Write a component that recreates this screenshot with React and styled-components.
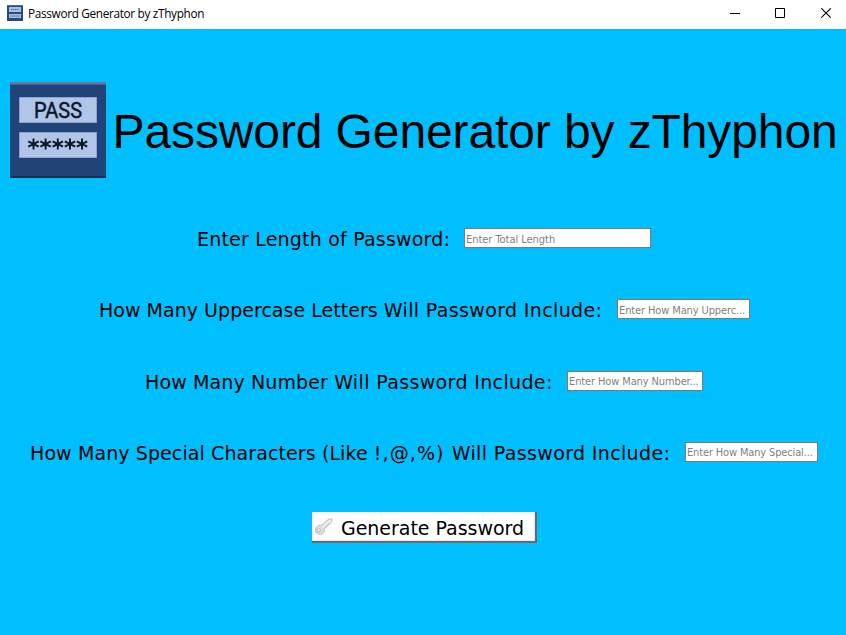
import React from "react";
import styled, { createGlobalStyle } from "styled-components";

const GlobalStyle = createGlobalStyle`
  * { box-sizing: border-box; }
  html, body { margin: 0; padding: 0; background: #00bfff; overflow: hidden; }
`;

const Window = styled.div`
  display: flex;
  flex-direction: column;
  width: 846px;
  height: 635px;
  background: #00bfff;
  color: #000;
`;

const TitleBar = styled.header`
  display: flex;
  align-items: flex-start;
  height: 29px;
  flex: none;
  padding-left: 7px;
  background: #fff;
`;

const TitleIcon = styled.svg`
  width: 16px;
  height: 16px;
  margin-top: 5px;
  flex: none;
`;

const TitleText = styled.span`
  margin: 5px auto 0 5px;
  font: 11.8px/17px "Open Sans", "Noto Sans", sans-serif;
  letter-spacing: -0.33px;
  white-space: nowrap;
`;

const WindowButton = styled.button`
  display: grid;
  place-items: center;
  width: ${(p) => p.$width}px;
  height: 27px;
  padding: 0;
  border: 0;
  background: transparent;
`;

const Glyph = styled.svg`
  display: block;
  width: 11px;
  height: 11px;
`;

const Banner = styled.section`
  display: flex;
  align-items: center;
  height: 96px;
  margin: 53px 0 0 10px;
  flex: none;
`;

const Logo = styled.svg`
  width: 96px;
  height: 96px;
  flex: none;
`;

const Heading = styled.h1`
  margin: 0 0 0 6.5px;
  padding-top: 3px;
  font: 400 48px/56px "Liberation Sans", Arial, sans-serif;
  letter-spacing: -0.11px;
  white-space: nowrap;
`;

const Form = styled.form`
  display: flex;
  flex-direction: column;
  gap: 51.3px;
  margin-top: 50px;
`;

const Row = styled.div`
  display: flex;
  align-items: center;
  height: 20px;
  padding-left: ${(p) => p.$indent}px;
`;

const Label = styled.label`
  width: ${(p) => p.$width}px;
  flex: none;
  padding: 2px 0 0 1px;
  font: 19px/22px Verdana, "DejaVu Sans", sans-serif;
  white-space: nowrap;
`;

const Phrase = styled.span`
  letter-spacing: ${(p) => p.$spacing}px;
`;

const Field = styled.input`
  width: ${(p) => p.$width}px;
  height: 20px;
  padding: 2px 1px 0;
  border: 1px solid #7a7a7a;
  border-radius: 0;
  outline: 0;
  background: #fff;
  font: 11px/16px Tahoma, "DejaVu Sans Condensed", "DejaVu Sans", sans-serif;
  font-stretch: condensed;
  letter-spacing: ${(p) => p.$spacing}px;
  text-overflow: ellipsis;
  &::placeholder { color: #7f7f7f; opacity: 1; }
`;

const GenerateButton = styled.button`
  display: flex;
  align-items: center;
  align-self: flex-start;
  width: 225px;
  height: 31px;
  margin: -1.6px 0 0 312px;
  padding: 3px 0 0 3px;
  border: solid #696969;
  border-width: 0 2px 2px 0;
  background: #fff;
  color: #000;
  box-shadow: inset -1px -1px #e8e8e8;
  font: 19px/24px Verdana, "DejaVu Sans", sans-serif;
  letter-spacing: -0.03px;
  white-space: nowrap;
`;

const KeyIcon = styled.svg`
  width: 18px;
  height: 18px;
  margin: -2px 8px 0 0;
  flex: none;
`;

const ending = ["Will Password Include:", 0.36];

const fields = [
  { id: "length", parts: [["Enter Length of Password:", 0.2]], indent: 196, label: 268, width: 187, hint: "Enter Total Length", hs: -0.04 },
  { id: "upper", parts: [["How Many Uppercase Letters ", 0.03], ending], indent: 98, label: 519, width: 133, hint: "Enter How Many Upperc...", hs: -0.12 },
  { id: "number", parts: [["How Many Number ", 0.12], ending], indent: 144, label: 423, width: 136, hint: "Enter How Many Number...", hs: -0.12 },
  { id: "special", parts: [["How Many Special Characters (Like ", 0.1], ["!,@,%) ", 1.1], ending], indent: 29, label: 656, width: 133, hint: "Enter How Many Special...", hs: -0.15 },
];

const starX = [23.5, 35.6, 47.8, 60, 72];

export default function App() {
  return (
    <Window>
      <GlobalStyle />
      <TitleBar>
        <TitleIcon viewBox="0 0 16 16">
          <rect width="16" height="16" fill="#244b82" />
          <path d="M0 .5h16" stroke="#4d6d99" />
          <path d="M2 2h12v5H2zM2 9h12v4H2z" fill="#a9c0e3" />
          <path d="M4 4.5h8M3 11h10" stroke="#536b8e" strokeDasharray="1.5 .4" />
        </TitleIcon>
        <TitleText>Password Generator by zThyphon</TitleText>
        <WindowButton $width={39} aria-label="Minimize">
          <Glyph viewBox="0 0 11 11"><path d="M1 5.5h10" stroke="#000" /></Glyph>
        </WindowButton>
        <WindowButton $width={53} aria-label="Maximize">
          <Glyph viewBox="0 0 11 11"><path d="M.5.5h9v9h-9z" fill="none" stroke="#000" /></Glyph>
        </WindowButton>
        <WindowButton $width={39} aria-label="Close">
          <Glyph viewBox="0 0 11 11"><path d="M.3.3l9.4 9.4M9.7.3l-9.4 9.4" stroke="#000" strokeWidth="1.1" /></Glyph>
        </WindowButton>
      </TitleBar>
      <Banner>
        <Logo viewBox="0 0 96 96">
          <rect width="96" height="96" fill="#204478" />
          <rect width="96" height="2.5" fill="#64799b" />
          <rect y="94" width="96" height="2" fill="#1d2c52" />
          <path d="M9.5 15.5h77v25h-77zM9.5 50.5h77v25h-77z" fill="#b0c5e8" stroke="#8ba4cf" />
          <text x="24" y="36" textLength="48" lengthAdjust="spacingAndGlyphs" fontFamily="Roboto, sans-serif" fontSize="22.5" fill="#0b1628" stroke="#0b1628" strokeWidth=".5">PASS</text>
          <g stroke="#0b1628" strokeWidth="1.9">
            {starX.map((x) => (
              <path key={x} d={`M${x} 56.5v11M${x - 5.2} 59.3l10.4 5.4M${x - 5.2} 64.7l10.4-5.4`} />
            ))}
          </g>
        </Logo>
        <Heading>Password Generator by zThyphon</Heading>
      </Banner>
      <Form onSubmit={(e) => e.preventDefault()}>
        {fields.map((f) => (
          <Row key={f.id} $indent={f.indent}>
            <Label htmlFor={f.id} $width={f.label}>
              {f.parts.map(([text, spacing]) => (
                <Phrase key={text} $spacing={spacing}>{text}</Phrase>
              ))}
            </Label>
            <Field id={f.id} placeholder={f.hint} $width={f.width} $spacing={f.hs} />
          </Row>
        ))}
        <GenerateButton type="submit">
          <KeyIcon viewBox="0 0 18 18">
            <path d="M7 7 13.4 1.2 17 .8l-.5 3.4-2.2 2-1 .3-.3 1.3-1.5.3-.3 1.5-1.4.5-.3 1.2A4.6 4.6 0 1 1 5 7.3z" fill="#dedede" stroke="#b4b4b4" strokeWidth=".8" />
            <path d="M7.5 9 16 1.7" stroke="#f4f4f4" strokeWidth="1.2" />
            <circle cx="3.8" cy="12.2" r="1.6" fill="#fff" stroke="#999" strokeWidth=".7" />
          </KeyIcon>
          Generate Password
        </GenerateButton>
      </Form>
    </Window>
  );
}
